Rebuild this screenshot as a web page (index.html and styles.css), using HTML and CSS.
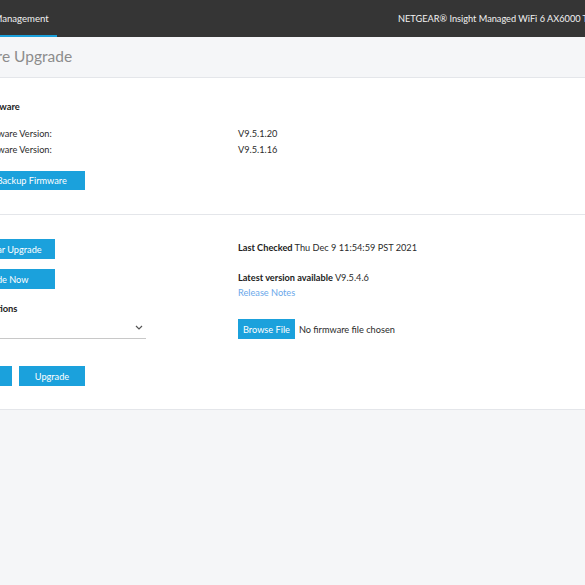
FILE: index.html
```html
<!DOCTYPE html>
<html>
<head>
<meta charset="utf-8">
<link rel="stylesheet" href="styles.css">
</head>
<body>
<div class="page">
  <header class="topbar">
    <nav class="nav">
      <span class="tab active">Device Management</span>
    </nav>
    <div class="brand">NETGEAR® Insight Managed WiFi 6 AX6000 Tri-Band Multi-Gig Access Point</div>
  </header>
  <div class="titlebar">
    <h1 class="title">Firmware Upgrade</h1>
  </div>
  <section class="panel panel-first">
    <h2 class="heading">Current Firmware</h2>
    <div class="info-rows">
      <div class="info-row"><span class="label">Current Firmware Version:</span><span class="value">V9.5.1.20</span></div>
      <div class="info-row"><span class="label">Current Firmware Version:</span><span class="value">V9.5.1.16</span></div>
    </div>
    <button class="btn btn-wide">Boot to Backup Firmware</button>
  </section>
  <section class="panel panel-second">
    <div class="col-left">
      <button class="btn btn-fixed">Set Regular Upgrade</button>
      <button class="btn btn-fixed">Upgrade Now</button>
      <h2 class="heading heading-options">Upgrade Options</h2>
      <div class="select">
        <svg class="chev" width="8" height="5" viewBox="0 0 8 5"><path d="M1 1 L4 4 L7 1" fill="none" stroke="#555" stroke-width="1.2"/></svg>
      </div>
      <div class="actions">
        <button class="btn btn-action">Cancel</button>
        <button class="btn btn-action">Upgrade</button>
      </div>
    </div>
    <div class="col-right">
      <p class="line"><b>Last Checked</b> Thu Dec 9 11:54:59 PST 2021</p>
      <p class="line line-latest"><b>Latest version available</b> V9.5.4.6</p>
      <a class="link" href="#">Release Notes</a>
      <div class="file-row">
        <button class="btn btn-browse">Browse File</button>
        <span class="file-name">No firmware file chosen</span>
      </div>
    </div>
  </section>
</div>
</body>
</html>
```

FILE: styles.css
```css
html, body {
  margin: 0;
  padding: 0;
  background: #f5f6f8;
  overflow: hidden;
  width: 585px;
  height: 585px;
}
body {
  font-family: Lato, "Liberation Sans", sans-serif;
  color: #2b2b2b;
  font-size: 9.2px;
}
.page {
  margin-left: -74px;
  width: 900px;
}
.topbar {
  height: 37px;
  background: #353535;
  display: flex;
  align-items: stretch;
}
.nav {
  width: 472px;
  display: flex;
  padding-left: 20px;
  box-sizing: border-box;
}
.tab {
  color: #f0f0f0;
  font-size: 9.6px;
  padding: 0 8px 0 16px;
  display: flex;
  align-items: center;
  border-bottom: 2px solid transparent;
  padding-top: 2px;
}
.tab.active {
  border-bottom-color: #1aa0db;
}
.brand {
  color: #f2f2f2;
  font-size: 9.2px;
  display: flex;
  align-items: center;
  white-space: nowrap;
}
.titlebar {
  height: 41px;
  border-bottom: 1px solid #e4e6ea;
  display: flex;
  align-items: center;
  padding: 0 20px 3px;
  box-sizing: border-box;
}
.title {
  margin: 0;
  font-weight: normal;
  font-size: 15.5px;
  color: #8c8c8c;
}
.panel {
  background: #fff;
  padding: 0 20px;
}
.panel-first {
  border-bottom: 1px solid #e4e6ea;
  padding-top: 22px;
  padding-bottom: 24px;
  height: 90px;
}
.heading {
  margin: 0;
  font-size: 9.4px;
  font-weight: bold;
  line-height: 14px;
  color: #222;
}
.info-rows {
  margin-top: 12px;
}
.info-row {
  display: grid;
  grid-template-columns: 292px 1fr;
  line-height: 16px;
}
.btn {
  border: none;
  background: #1ba1dc;
  color: #fff;
  font-family: Lato, "Liberation Sans", sans-serif;
  font-size: 9.2px;
  height: 20px;
  padding: 0 10px;
  cursor: pointer;
  display: block;
}
.btn-wide {
  margin-top: 13px;
  height: 19px;
  padding: 0 18px;
}
.panel-second {
  display: grid;
  grid-template-columns: 292px 1fr;
  padding-top: 24px;
  padding-bottom: 23px;
  border-bottom: 1px solid #e4e6ea;
}
.col-left {
  display: flex;
  flex-direction: column;
  align-items: flex-start;
}
.btn-fixed {
  width: 109px;
  padding: 0;
  margin-bottom: 10px;
}
.heading-options {
  margin-top: 3px;
}
.select {
  width: 200px;
  height: 22px;
  margin-top: 1px;
  border-bottom: 1px solid #c8c8c8;
  display: flex;
  align-items: center;
  justify-content: flex-end;
  padding-right: 3px;
  box-sizing: border-box;
}
.actions {
  display: flex;
  gap: 7px;
  margin-top: 27px;
}
.btn-action {
  width: 66px;
  padding: 0;
}
.col-right {
  display: flex;
  flex-direction: column;
  align-items: flex-start;
  padding-top: 2px;
}
.line {
  margin: 0;
  line-height: 14px;
}
.line b {
  color: #222;
}
.line-latest {
  margin-top: 16px;
}
.link {
  color: #6aa8ea;
  text-decoration: none;
  line-height: 16px;
}
.file-row {
  margin-top: 18px;
  display: flex;
  align-items: center;
  gap: 4px;
}
.btn-browse {
  height: 20px;
  padding: 0 5px;
}
.file-name {
  color: #2b2b2b;
}
```
